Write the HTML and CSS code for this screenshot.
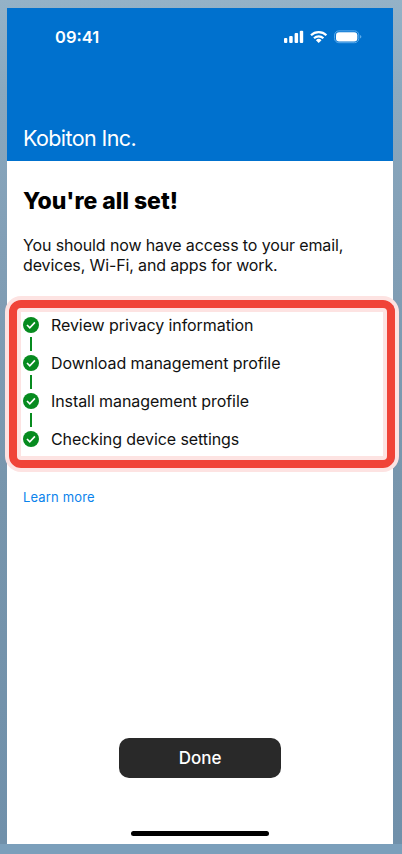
FILE: index.html
```html
<!DOCTYPE html>
<html lang="en">
<head>
<meta charset="utf-8">
<title>Kobiton Inc.</title>
<link rel="stylesheet" href="styles.css">
</head>
<body>
<svg class="symbols" width="0" height="0" aria-hidden="true">
  <symbol id="check" viewBox="0 0 16 16">
    <circle cx="8" cy="8" r="8" fill="#078b1f"/>
    <path d="M4 8 6.8 10.9l5.1-5.5" fill="none" stroke="#fff" stroke-width="1.6"/>
  </symbol>
</svg>
<main class="phone">
  <header class="header">
    <div class="status">
      <span class="time">09:41</span>
      <div class="indicators">
        <svg width="20" height="14" viewBox="0 0 20 14" fill="#fff"><rect x="0" y="8" width="3.3" height="5" rx="1"/><rect x="5.2" y="6" width="3.5" height="7" rx="1"/><rect x="10.6" y="3" width="3.5" height="10" rx="1"/><rect x="15.8" y="0.8" width="3.4" height="12.2" rx="1"/></svg>
        <svg width="18" height="14" viewBox="0 0 18 14" fill="none" stroke="#fff" stroke-width="2.2"><path d="M1 5.2a11.2 11.2 0 0 1 15.4 0M4 8.3a6.9 6.9 0 0 1 9.4 0"/><path d="M8.7 12.9 5.9 10.2a4 4 0 0 1 5.6 0z" fill="#fff" stroke="none"/></svg>
        <svg width="28" height="14" viewBox="0 0 28 14"><rect x=".6" y=".9" width="24.2" height="11.8" rx="4.2" fill="none" stroke="#5cacec" stroke-width="1"/><rect x="2" y="2.2" width="21.3" height="9.2" rx="3" fill="#fff"/><path d="M26 5.1q1.4.6 1.4 1.7T26 8.5z" fill="#5cacec"/></svg>
      </div>
    </div>
    <div class="org">Kobiton Inc.</div>
  </header>
  <h1 class="title">You're all set!</h1>
  <p class="intro">You should now have access to your email,<br>devices, Wi-Fi, and apps for work.</p>
  <ul class="steps">
    <li class="step"><svg class="check"><use href="#check"/></svg><span>Review privacy information</span></li>
    <li class="step"><svg class="check"><use href="#check"/></svg><span>Download management profile</span></li>
    <li class="step"><svg class="check"><use href="#check"/></svg><span>Install management profile</span></li>
    <li class="step"><svg class="check"><use href="#check"/></svg><span>Checking device settings</span></li>
  </ul>
  <a class="learn">Learn more</a>
  <footer class="footer">
    <button class="done">Done</button>
    <div class="home"></div>
  </footer>
</main>
</body>
</html>
```
FILE: styles.css
```css
* { box-sizing: border-box; }
body {
  margin: 0;
  width: 402px;
  height: 854px;
  overflow: hidden;
  padding: 8px 9px 10px 7px;
  background: linear-gradient(#7b9fbb, #7b9fbb) 0 844px / 402px 10px no-repeat,
    linear-gradient(#94b2c7 0, #8aa8be 90px, #829fb6 250px, #7795ac 500px, #7090aa 844px);
  font-family: Inter, "Liberation Sans", sans-serif;
  color: #111;
}
.symbols { position: absolute; }
.phone {
  width: 386px;
  height: 836px;
  background: #fff;
  display: flex;
  flex-direction: column;
}
.header {
  height: 153px;
  flex: none;
  background: #0071ce;
  color: #fff;
  display: flex;
  flex-direction: column;
  justify-content: space-between;
  padding: 18px 31px 9px 16px;
}
.status { display: flex; justify-content: space-between; align-items: center; height: 22px; padding-left: 32px; }
.time { font-size: 16.5px; font-weight: 600; letter-spacing: 0; }
.indicators { display: flex; gap: 6px; align-items: center; }
.indicators svg { display: block; }
.org { font-size: 21.5px; line-height: 28px; letter-spacing: -0.6px; }
.title { margin: 24px 16px 0; font-size: 23px; line-height: 32px; font-weight: 800; letter-spacing: 0; color: #000; }
.intro { margin: 18px 16px 0; font-size: 16px; line-height: 20.4px; letter-spacing: -0.13px; white-space: nowrap; }
.steps {
  flex: none;
  width: 386px;
  height: 168px;
  margin: 24px 0 0 2px;
  padding: 6px;
  list-style: none;
  border: 8px solid #f04438;
  border-radius: 12px;
  box-shadow: 0 0 0 4px #fde3e2, inset 0 0 0 4px #fde3e2;
}
.step { position: relative; display: flex; align-items: center; gap: 12px; height: 22px; font-size: 16px; line-height: 22px; letter-spacing: -0.08px; white-space: nowrap; }
.step + .step { margin-top: 16px; }
.step + .step::before {
  content: "";
  position: absolute;
  left: 7px;
  top: -15px;
  width: 2px;
  height: 14px;
  background: #078b1f;
}
.check { width: 16px; height: 16px; flex: none; }
.learn { margin: 20px 16px 0; font-size: 13px; line-height: 18px; letter-spacing: 0.15px; color: #0b83ec; }
.footer { margin-top: auto; display: flex; flex-direction: column; align-items: center; padding-bottom: 8px; }
.done {
  width: 162px;
  height: 40px;
  padding: 0;
  border: 0;
  border-radius: 10px;
  background: #292929;
  color: #fff;
  font: 500 17px Inter, sans-serif;
}
.home { width: 138px; height: 5px; margin-top: 53px; border-radius: 3px; background: #000; }
```
